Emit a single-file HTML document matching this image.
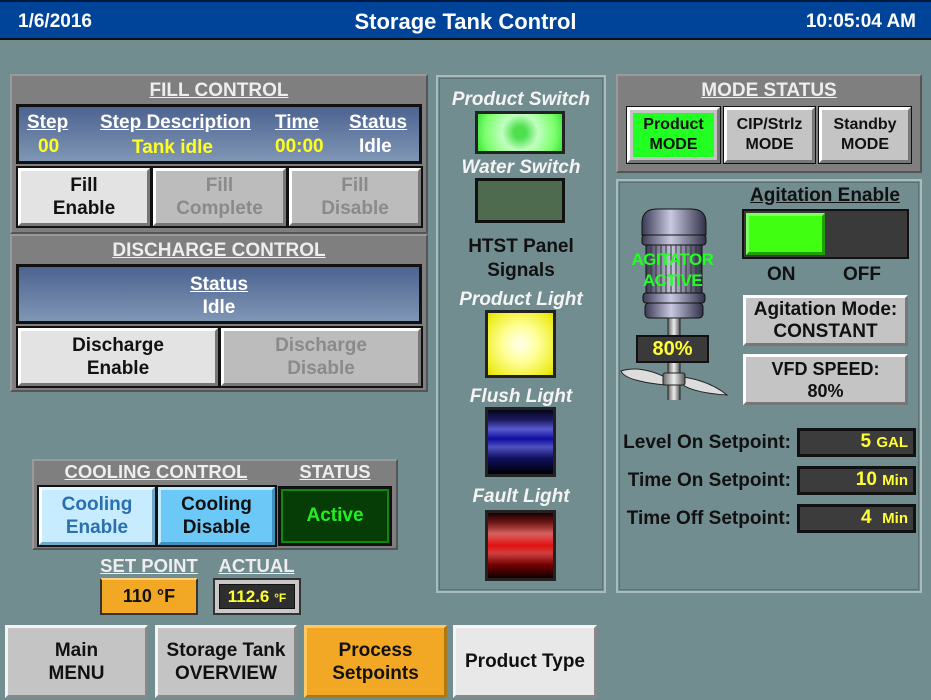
<!DOCTYPE html>
<html><head><style>
*{box-sizing:border-box;margin:0;padding:0}
body{width:931px;height:700px;background:#728d8f;font-family:"Liberation Sans",sans-serif;font-weight:bold;position:relative;overflow:hidden;white-space:nowrap}
.a{position:absolute}
.hdr{left:0;top:0;width:931px;height:40px;background:#00449a;border-top:2px solid #001a40;border-bottom:2px solid #111;color:#fff;font-size:19px}
.panel{background:#7f7f7f;border:2px solid #9a9a9a;border-right-color:#555;border-bottom-color:#555}
.ttl{color:#eee;text-decoration:underline;font-size:19px;text-align:center;position:absolute}
.blue{background:linear-gradient(#4c6390,#8096b5);border:3px solid #111}
.btn{display:flex;align-items:center;justify-content:center;text-align:center;font-size:19px;line-height:23px;border:3px solid;border-color:#fff #777 #777 #fff;outline:2px solid #111}
.on{background:#e3e3e3;color:#111}
.off{background:#bcbcbc;color:#8a8a8a}
.lbl{color:#f4f4f4;font-style:italic;font-size:19px;text-align:center;width:170px;left:436px}
.disp{background:#3c3c3c;border:3px solid #111;color:#ffff33;font-size:19px;text-align:right;padding-right:5px;line-height:22px}
.sp{color:#111;font-size:19px;text-align:right;width:190px;left:601px}
.nav{display:flex;align-items:center;justify-content:center;text-align:center;font-size:19px;line-height:23px;color:#111;border:3px solid;border-color:#f4f4f4 #888 #888 #f4f4f4}
</style></head><body>
<div class="a hdr"><span class="a" style="left:18px;top:9px">1/6/2016</span><span class="a" style="left:0;width:931px;text-align:center;top:7px;font-size:22px">Storage Tank Control</span><span class="a" style="right:15px;top:9px">10:05:04 AM</span></div>

<!-- Fill control -->
<div class="a panel" style="left:10px;top:74px;width:418px;height:160px"></div>
<div class="ttl" style="left:10px;width:418px;top:80px">FILL CONTROL</div>
<div class="a blue" style="left:16px;top:104px;width:406px;height:60px"></div>
<div class="a" style="left:16px;top:112px;width:406px;color:#fff;font-size:19px">
<span class="a" style="left:11px;text-decoration:underline">Step</span>
<span class="a" style="left:84px;text-decoration:underline">Step Description</span>
<span class="a" style="left:259px;text-decoration:underline">Time</span>
<span class="a" style="left:333px;text-decoration:underline">Status</span>
<span class="a" style="left:22px;top:24px;color:#ffff22">00</span>
<span class="a" style="left:116px;top:25px;color:#ffff22">Tank idle</span>
<span class="a" style="left:259px;top:24px;color:#ffff22">00:00</span>
<span class="a" style="left:343px;top:24px">Idle</span></div>
<div class="a btn on" style="left:18px;top:168px;width:132px;height:58px">Fill<br>Enable</div>
<div class="a btn off" style="left:153px;top:168px;width:133px;height:58px">Fill<br>Complete</div>
<div class="a btn off" style="left:289px;top:168px;width:132px;height:58px">Fill<br>Disable</div>

<div class="a panel" style="left:10px;top:234px;width:418px;height:158px"></div>
<div class="ttl" style="left:10px;width:418px;top:240px">DISCHARGE CONTROL</div>
<div class="a blue" style="left:16px;top:264px;width:406px;height:60px"></div>
<div class="a" style="left:16px;top:273px;width:406px;text-align:center;color:#fff;font-size:19px;line-height:23px"><u>Status</u><br>Idle</div>
<div class="a btn on" style="left:18px;top:328px;width:200px;height:58px">Discharge<br>Enable</div>
<div class="a btn off" style="left:221px;top:328px;width:200px;height:58px">Discharge<br>Disable</div>

<!-- Cooling -->
<div class="a panel" style="left:32px;top:459px;width:366px;height:91px"></div>
<div class="ttl" style="left:56px;width:200px;top:461px;font-size:18.5px">COOLING CONTROL</div>
<div class="ttl" style="left:280px;width:110px;top:461px;font-size:18.5px">STATUS</div>
<div class="a btn" style="left:39px;top:487px;width:116px;height:58px;background:#c8ecff;color:#2a6fb0;border-color:#e8f8ff #6fa8c8 #6fa8c8 #fff">Cooling<br>Enable</div>
<div class="a btn" style="left:158px;top:487px;width:117px;height:58px;background:#6cc8f6;color:#111;border-color:#bfeaff #3f92bf #3f92bf #bfeaff">Cooling<br>Disable</div>
<div class="a" style="left:278px;top:486px;width:114px;height:60px;background:#063d06;border:3px solid #111;outline:2px solid #0a8a0a;outline-offset:-5px;color:#22ee22;font-size:19px;text-align:center;line-height:54px">Active</div>
<div class="ttl" style="left:94px;width:110px;top:555px;font-size:18.5px">SET POINT</div>
<div class="ttl" style="left:208px;width:97px;top:555px;font-size:18.5px">ACTUAL</div>
<div class="a" style="left:100px;top:578px;width:98px;height:37px;background:#f2a824;border:2px solid #333;border-top-color:#ffd080;color:#111;font-size:18px;text-align:center;line-height:33px">110 °F</div>
<div class="a" style="left:213px;top:578px;width:88px;height:37px;background:#c8c8c8;border:2px solid #333;padding:4px"><div style="background:#2e2e2e;border:1px solid #111;height:100%;color:#ffff33;font-size:17px;text-align:center;line-height:24px">112.6 <span style="font-size:12px">°F</span></div></div>

<!-- Nav -->
<div class="a nav" style="left:5px;top:625px;width:143px;height:73px;background:#c4c4c4">Main<br>MENU</div>
<div class="a nav" style="left:155px;top:625px;width:142px;height:73px;background:#c4c4c4">Storage Tank<br>OVERVIEW</div>
<div class="a nav" style="left:304px;top:625px;width:143px;height:73px;background:#f2a824;border-color:#ffc860 #b07810 #b07810 #ffc860">Process<br>Setpoints</div>
<div class="a nav" style="left:453px;top:625px;width:144px;height:73px;background:#e8e8e8">Product Type</div>

<!-- Middle -->
<div class="a" style="left:436px;top:75px;width:170px;height:518px;border:2px solid #a9bcbc;outline:1px solid #5a7072;outline-offset:-4px"></div>
<div class="a lbl" style="top:89px">Product Switch</div>
<div class="a" style="left:475px;top:111px;width:90px;height:43px;background:radial-gradient(circle at 50% 50%,#4fe04f 0 6px,#c0ffc0 18px,#7cff6c 35px,#3ce23c);border:3px solid #222"></div>
<div class="a lbl" style="top:157px">Water Switch</div>
<div class="a" style="left:475px;top:178px;width:90px;height:45px;background:#4f6b4f;border:3px solid #111"></div>
<div class="a" style="left:436px;top:235px;width:170px;text-align:center;color:#111;font-size:19px;line-height:24px">HTST Panel<br>Signals</div>
<div class="a lbl" style="top:289px">Product Light</div>
<div class="a" style="left:485px;top:310px;width:71px;height:68px;background:radial-gradient(circle,#fffff0 0,#ffff99 18px,#eeee22 38px,#dddd00);border:3px solid #222"></div>
<div class="a lbl" style="top:386px">Flush Light</div>
<div class="a" style="left:485px;top:407px;width:71px;height:70px;background:linear-gradient(#05051a 0,#1a1a60 15%,#5a5ad0 30%,#0e0ea0 45%,#5050c0 58%,#101060 75%,#000 100%);border:3px solid #222"></div>
<div class="a lbl" style="top:486px">Fault Light</div>
<div class="a" style="left:485px;top:510px;width:71px;height:71px;background:linear-gradient(#1a0000 0,#701818 15%,#d86060 32%,#e01010 50%,#d04040 62%,#700000 80%,#100000 100%);border:3px solid #222"></div>

<!-- Mode status -->
<div class="a panel" style="left:616px;top:74px;width:306px;height:99px"></div>
<div class="ttl" style="left:616px;width:306px;top:80px">MODE STATUS</div>
<div class="a btn" style="left:627px;top:107px;width:93px;height:56px;background:#c4c4c4;outline-width:1px;font-size:16px;line-height:20px;padding:3px"><div style="background:#22ff22;width:100%;height:100%;display:flex;align-items:center;justify-content:center;color:#111">Product<br>MODE</div></div>
<div class="a btn" style="left:724px;top:107px;width:91px;height:56px;background:#c4c4c4;color:#111;outline-width:1px;font-size:16px;line-height:20px">CIP/Strlz<br>MODE</div>
<div class="a btn" style="left:819px;top:107px;width:92px;height:56px;background:#c4c4c4;color:#111;outline-width:1px;font-size:16px;line-height:20px">Standby<br>MODE</div>

<!-- Right lower -->
<div class="a" style="left:616px;top:179px;width:306px;height:414px;border:2px solid #a9bcbc;outline:1px solid #5a7072;outline-offset:-4px"></div>
<div class="a" style="left:737px;top:185px;width:176px;text-align:center;color:#111;font-size:19px;text-decoration:underline">Agitation Enable</div>
<div class="a" style="left:742px;top:209px;width:167px;height:50px;background:#3a3a3a;border:2px solid #111"></div>
<div class="a" style="left:746px;top:213px;width:79px;height:42px;background:#40ff10;border:3px solid;border-color:#80ff60 #20a000 #20a000 #80ff60"></div>
<div class="a" style="left:767px;top:264px;color:#111;font-size:19px">ON</div>
<div class="a" style="left:843px;top:264px;color:#111;font-size:19px">OFF</div>
<div class="a btn" style="left:743px;top:295px;width:165px;height:51px;background:#c4c4c4;color:#111;outline:none;line-height:22px">Agitation Mode:<br>CONSTANT</div>
<div class="a btn" style="left:743px;top:354px;width:165px;height:51px;background:#c4c4c4;color:#111;outline:none;font-size:18px;line-height:22px">VFD SPEED:<br>80%</div>

<!-- motor -->
<svg class="a" style="left:615px;top:205px" width="115" height="195" viewBox="0 0 115 195">
<defs><linearGradient id="m" x1="0" x2="1"><stop offset="0" stop-color="#3a3a55"/><stop offset=".45" stop-color="#c8c8e0"/><stop offset="1" stop-color="#303048"/></linearGradient>
<linearGradient id="s" x1="0" x2="1"><stop offset="0" stop-color="#666"/><stop offset=".5" stop-color="#eee"/><stop offset="1" stop-color="#555"/></linearGradient></defs>
<path d="M27 30 V18 Q27 4 42 4 H76 Q91 4 91 18 V30Z" fill="url(#m)" stroke="#111"/>
<rect x="27" y="30" width="64" height="10" rx="3" fill="url(#m)" stroke="#111"/>
<rect x="31" y="40" width="56" height="50" fill="url(#m)" stroke="#111"/>
<g stroke="#333" stroke-width="1">
<line x1="36" y1="40" x2="36" y2="90"/><line x1="41" y1="40" x2="41" y2="90"/><line x1="46" y1="40" x2="46" y2="90"/><line x1="51" y1="40" x2="51" y2="90"/><line x1="56" y1="40" x2="56" y2="90"/><line x1="61" y1="40" x2="61" y2="90"/><line x1="66" y1="40" x2="66" y2="90"/><line x1="71" y1="40" x2="71" y2="90"/><line x1="76" y1="40" x2="76" y2="90"/><line x1="81" y1="40" x2="81" y2="90"/></g>
<rect x="28" y="88" width="62" height="10" rx="3" fill="url(#m)" stroke="#111"/>
<rect x="30" y="98" width="58" height="15" rx="4" fill="url(#m)" stroke="#111"/>
<rect x="53" y="113" width="12" height="92" fill="url(#s)" stroke="#222"/>
<path d="M50 172 Q25 160 6 166 Q10 176 50 180Z" fill="#ddd" stroke="#222"/>
<path d="M68 172 Q95 176 112 190 Q80 188 68 180Z" fill="#ddd" stroke="#222"/>
<rect x="48" y="168" width="22" height="12" rx="2" fill="url(#s)" stroke="#222"/>
</svg>
<div class="a" style="left:610px;top:249px;width:125px;text-align:center;color:#22ff22;font-size:17px;line-height:21px;letter-spacing:-.5px">AGITATOR<br>ACTIVE</div>
<div class="a" style="left:636px;top:335px;width:73px;height:28px;background:#3a3a3a;border:2px solid #111;color:#ffff33;font-size:20px;text-align:center;line-height:24px">80%</div>

<div class="a sp" style="top:432px">Level On Setpoint:</div>
<div class="a disp" style="left:797px;top:428px;width:119px;height:29px">5 <span style="font-size:15px">GAL</span></div>
<div class="a sp" style="top:470px">Time On Setpoint:</div>
<div class="a disp" style="left:797px;top:466px;width:119px;height:29px">10 <span style="font-size:15px">Min</span></div>
<div class="a sp" style="top:508px">Time Off Setpoint:</div>
<div class="a disp" style="left:797px;top:504px;width:119px;height:29px">4 &nbsp;<span style="font-size:15px">Min</span></div>
</body></html>
